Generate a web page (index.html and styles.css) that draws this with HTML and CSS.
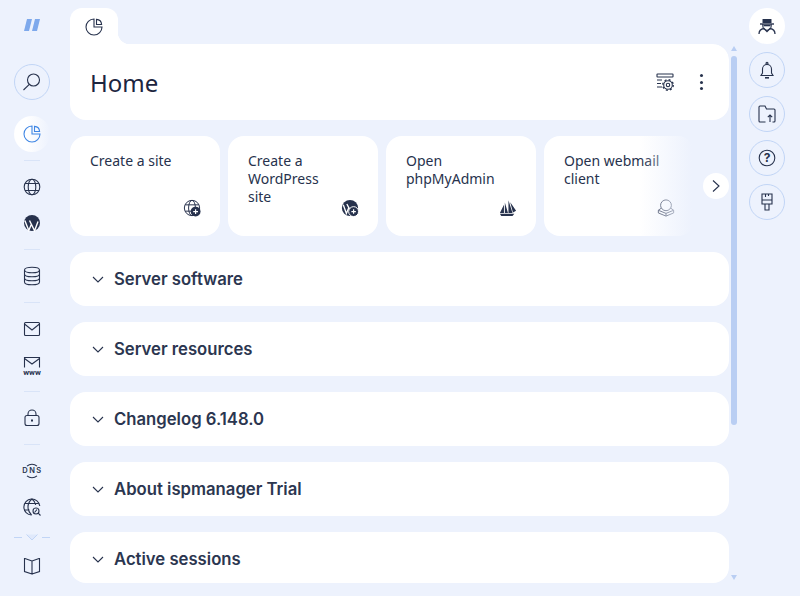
FILE: index.html
```html
<!DOCTYPE html>
<html lang="en">
<head>
  <meta charset="UTF-8" />
  <title>Home - ispmanager</title>
  <meta name="viewport" content="width=device-width, initial-scale=1" />
  <link rel="stylesheet" href="styles.css">
</head>
<body>
  <!-- Left menu -->
  <nav class="sidebar">
    <svg class="logo" width="16" height="12" viewBox="0 0 16 12"><path d="M3 0h5L5 12H0zM11 0h5l-3 12H8z" fill="#7ea9ec"/></svg>
    <button class="round-btn search-btn">
      <svg class="icon" viewBox="0 0 20 20"><circle cx="11.500" cy="8" r="6"/><path d="M7.300 12.300 1.500 18"/></svg>
    </button>
    <button class="round-btn home-btn">
      <svg class="icon icon-blue" viewBox="0 0 20 20"><path d="M10 2a8 8 0 1 0 8 8h-8z"/><path d="M12.500 2.400v5.100h5.100a5.500 5.500 0 0 0-5.100-5.100z"/></svg>
    </button>
    <div class="divider"></div>
    <a class="nav-item">
      <svg class="icon" viewBox="0 0 20 20"><circle cx="10" cy="10" r="7.800"/><ellipse cx="10" cy="10" rx="3.800" ry="7.800"/><path d="M3 6.500h14M3 13.500h14"/></svg>
    </a>
    <a class="nav-item">
      <svg class="icon" viewBox="0 0 20 20"><circle cx="10" cy="10" r="8" fill="#27324d" stroke="none"/><path d="M2.800 7.500 6.800 17.500 9.600 10.800M7.500 7.500 12.600 17.800 16 8.500" stroke="#fff" stroke-width="1.400"/></svg>
    </a>
    <div class="divider"></div>
    <a class="nav-item">
      <svg class="icon" viewBox="0 0 20 20"><ellipse cx="10" cy="4" rx="7.500" ry="2.800"/><path d="M2.500 4v12c0 1.600 3.400 2.800 7.500 2.800s7.500-1.200 7.500-2.800V4M2.500 8c0 1.600 3.400 2.800 7.500 2.800s7.500-1.200 7.500-2.800M2.500 12c0 1.600 3.400 2.800 7.500 2.800s7.500-1.200 7.500-2.800"/></svg>
    </a>
    <div class="divider"></div>
    <a class="nav-item">
      <svg class="icon" viewBox="0 0 20 20"><rect x="2.500" y="3.500" width="15" height="13" rx="1"/><path d="M2.500 5 10 11l7.500-6"/></svg>
    </a>
    <a class="nav-item www-item">
      <svg class="icon" viewBox="0 0 20 20"><path d="M2.500 12.500V2.500h15v10M2.500 3.500 10 9l7.500-5.500"/></svg>
      <span class="www-label">www</span>
    </a>
    <div class="divider"></div>
    <a class="nav-item">
      <svg class="icon" viewBox="0 0 20 20"><rect x="3" y="7.500" width="14" height="10" rx="2"/><path d="M6 7.500V6a4 4 0 0 1 8 0v1.500"/><path d="M10 11.500v2" stroke-width="2"/></svg>
    </a>
    <div class="divider"></div>
    <a class="nav-item dns-item">
      <svg class="icon" viewBox="0 0 20 20"><path d="M5 5.200a7.500 7.500 0 0 1 10 0M5 14.800a7.500 7.500 0 0 0 10 0"/></svg>
      <span class="dns-label">DNS</span>
    </a>
    <a class="nav-item">
      <svg class="icon" viewBox="0 0 20 20"><path d="M9.500 18a8 8 0 1 1 8.300-9"/><path d="M10 2C7.500 4 6 7 6 10s1.500 6 3.500 8M10 2c2 1.500 3.300 3.800 3.700 6M2.800 6.500h14M2.500 13h5"/><circle cx="14" cy="14" r="3"/><path d="M16.200 16.200 18.500 18.500M12.500 15.500l2.500-3"/></svg>
    </a>
    <div class="fold">
      <span class="fold-dash"></span>
      <svg width="12" height="7" viewBox="0 0 12 7"><path d="M.5.500 6 6 11.500.500" fill="#e0e9fb" stroke="#c1d5f6"/></svg>
      <span class="fold-dash"></span>
    </div>
    <a class="nav-item">
      <svg class="icon" viewBox="0 0 20 20"><path d="M10 5 3 2.500H2.500V15.500L10 18V5zM10 5l7-2.500h.500V15.500L10 18"/></svg>
    </a>
  </nav>

  <main class="content">
    <div class="tab-row">
      <div class="tab">
        <svg class="icon" viewBox="0 0 20 20"><path d="M10 2a8 8 0 1 0 8 8h-8z"/><path d="M12.500 2.400v5.100h5.100a5.500 5.500 0 0 0-5.100-5.100z"/></svg>
      </div>
    </div>

    <div class="scroll-area">
      <div class="page">
        <header class="page-head">
          <h1>Home</h1>
          <div class="head-actions">
            <svg class="icon" viewBox="0 0 20 20"><rect x="2" y="2" width="16" height="3" rx=".5"/><path d="M2 8h5M2 11.500h4M2 15h5"/><circle cx="13" cy="13" r="4.300"/><circle cx="13" cy="13" r="1.700"/><circle cx="13" cy="13" r="5.300" stroke-width="1.300" stroke-dasharray="2 2.160"/></svg>
            <span class="dots"><i></i><i></i><i></i></span>
          </div>
        </header>

        <div class="quick-wrap">
          <div class="quick-row">
            <a class="quick-card">
              <span>Create a site</span>
              <svg class="icon quick-icon" viewBox="0 0 20 20"><circle cx="10" cy="10" r="8.500"/><ellipse cx="10" cy="10" rx="3.800" ry="8.500"/><path d="M2.500 6.500h15M2.500 13.500h15"/><circle cx="14" cy="14" r="5.500" fill="#27324d" stroke="none"/><path d="M14 11.300v5.400M11.300 14h5.400" stroke="#fff" stroke-width="1.300"/></svg>
            </a>
            <a class="quick-card">
              <span>Create a<br>WordPress<br>site</span>
              <svg class="icon quick-icon" viewBox="0 0 20 20"><circle cx="10" cy="10" r="9" fill="#27324d" stroke="none"/><path d="M2.500 6.500 6 16l3-7M6.500 5.500 11 14" stroke="#fff" stroke-width="1.500"/><circle cx="14" cy="14" r="5.500" fill="#27324d" stroke="#fff"/><path d="M14 11.500v5M11.500 14h5" stroke="#fff" stroke-width="1.300"/></svg>
            </a>
            <a class="quick-card">
              <span>Open<br>phpMyAdmin</span>
              <svg class="icon quick-icon" viewBox="0 0 20 20"><path d="M1 15.500 5.500 6.500V15.500zM6.500 15.500V4L10 15.500zM10.500 15.500V1.500L15 15.500zM12.500 3.500 19 13 15.500 15z" fill="#27324d" stroke="none"/><path d="M1 16.500h16L15 19H2.500z" fill="#27324d" stroke="none"/></svg>
            </a>
            <a class="quick-card">
              <span>Open webmail client</span>
              <svg class="icon quick-icon" viewBox="0 0 20 20"><circle cx="10" cy="7" r="6"/><path d="M5 10 1.500 12.500v3L10 19l8.500-3.500v-3L15 10M1.500 12.500 10 16l8.500-3.500M10 16v3"/></svg>
            </a>
          </div>
          <div class="quick-fade"></div>
          <button class="next-btn">
            <svg width="8" height="12" viewBox="0 0 8 12"><path d="M1 .5 7 6l-6 5.500" fill="none" stroke="#27324d" stroke-width="1.100"/></svg>
          </button>
        </div>

        <section class="panel"><svg class="chev" width="12" height="7" viewBox="0 0 12 7"><path d="M1 1l5 5 5-5"/></svg><h2>Server software</h2></section>
        <section class="panel"><svg class="chev" width="12" height="7" viewBox="0 0 12 7"><path d="M1 1l5 5 5-5"/></svg><h2>Server resources</h2></section>
        <section class="panel"><svg class="chev" width="12" height="7" viewBox="0 0 12 7"><path d="M1 1l5 5 5-5"/></svg><h2>Changelog 6.148.0</h2></section>
        <section class="panel"><svg class="chev" width="12" height="7" viewBox="0 0 12 7"><path d="M1 1l5 5 5-5"/></svg><h2>About ispmanager Trial</h2></section>
        <section class="panel"><svg class="chev" width="12" height="7" viewBox="0 0 12 7"><path d="M1 1l5 5 5-5"/></svg><h2>Active sessions</h2></section>
      </div>

      <div class="scrollbar">
        <span class="arrow-up"></span>
        <span class="thumb"></span>
        <span class="arrow-down"></span>
      </div>
    </div>
  </main>

  <!-- Right buttons -->
  <aside class="rail">
    <button class="round-btn user-btn">
      <svg class="icon" viewBox="0 0 20 20"><path d="M5.500 7V3.500Q5.500 3 6 3h8q.5 0 .5.500V7z" fill="#27324d" stroke="none"/><path d="M3 8h14" stroke-width="1.400"/><path d="M5.800 8v2a4.200 4.200 0 0 0 8.400 0V8"/><path d="M6.500 9.500h7" stroke-width="1.600"/><path d="M2 18c0-3 2-5 5-5.500l3 3 3-3c3 .5 5 2.500 5 5.500" stroke-width="1.300"/></svg>
    </button>
    <button class="round-btn">
      <svg class="icon" viewBox="0 0 20 20"><path d="M4 15.500h12l-1.500-2.500V9a4.500 4.500 0 0 0-9 0v4z"/><path d="M8 17.800h4" stroke-width="1.600"/><circle cx="10" cy="3.200" r="1"/></svg>
    </button>
    <button class="round-btn">
      <svg class="icon" viewBox="0 0 20 20"><path d="M8.500 18H3a1 1 0 0 1-1-1V3a1 1 0 0 1 1-1h5l1.500 3H17a1 1 0 0 1 1 1v11a1 1 0 0 1-1 1h-1.500"/><path d="M13 18v-7M10.800 13.200 13 11l2.200 2.200"/></svg>
    </button>
    <button class="round-btn">
      <svg class="icon" viewBox="0 0 20 20"><circle cx="10" cy="10" r="7.800"/><text class="q-mark" x="10" y="14" text-anchor="middle">?</text></svg>
    </button>
    <button class="round-btn">
      <svg class="icon" viewBox="0 0 20 20"><path d="M5 2h10v10H5zM5 8h10M8.500 2v3M11.500 2v2M8 12v6h4v-6"/></svg>
    </button>
  </aside>
</body>
</html>
```

FILE: styles.css
```css
* {
  box-sizing: border-box;
}
html, body {
  height: 100%;
}
body {
  margin: 0;
  display: flex;
  overflow: hidden;
  background: #edf2fd;
  color: #27324d;
  font-family: 'Noto Sans', sans-serif;
}
button {
  padding: 0;
  font: inherit;
  cursor: pointer;
}
a {
  cursor: pointer;
}
.icon {
  display: block;
  width: 20px;
  height: 20px;
  fill: none;
  stroke: #27324d;
  stroke-width: 1.1;
}
.icon-blue {
  stroke: #3f86e4;
}

/* left menu */
.sidebar {
  flex: none;
  width: 70px;
  padding: 19px 6px 0 0;
  display: flex;
  flex-direction: column;
  align-items: center;
}
.logo {
  display: block;
  margin-bottom: 33px;
}
.round-btn {
  width: 36px;
  height: 36px;
  flex: none;
  display: flex;
  align-items: center;
  justify-content: center;
  border: 1px solid #c1d5f6;
  border-radius: 50%;
  background: transparent;
}
.search-btn {
  margin-bottom: 16px;
}
.home-btn {
  border: none;
  background: linear-gradient(90deg, #ffffff 35%, #edf2fd 100%);
}
.divider {
  width: 16px;
  height: 1px;
  margin: 8px 0;
  background: #d9e4f8;
}
.nav-item {
  position: relative;
  width: 36px;
  height: 36px;
  flex: none;
  display: flex;
  align-items: center;
  justify-content: center;
}
.www-label {
  position: absolute;
  left: 0;
  right: 0;
  top: 21px;
  text-align: center;
  font-family: 'Roboto', sans-serif;
  font-size: 8px;
  font-weight: 700;
  line-height: 10px;
}
.dns-label {
  position: absolute;
  left: 1px;
  right: 0;
  top: 12px;
  text-align: center;
  font-family: 'Inter', sans-serif;
  font-size: 7.5px;
  font-weight: 600;
  letter-spacing: 1.5px;
  line-height: 12px;
}
.fold {
  display: flex;
  align-items: center;
  justify-content: center;
  gap: 4px;
  width: 36px;
  height: 22px;
  margin-top: 1px;
}
.fold-dash {
  width: 8px;
  height: 1px;
  background: #c1d5f6;
}

/* middle column */
.content {
  flex: none;
  width: 667px;
  display: flex;
  flex-direction: column;
  padding: 8px 0 13px;
  min-height: 0;
}
.tab-row {
  flex: none;
  height: 36px;
}
.tab {
  position: relative;
  width: 48px;
  height: 36px;
  padding: 9px 0 0 14px;
  background: #fff;
  border-radius: 12px 12px 0 0;
}
.tab::after {
  content: '';
  position: absolute;
  left: 48px;
  bottom: 0;
  width: 12px;
  height: 12px;
  background: radial-gradient(circle at 100% 0, transparent 12px, #fff 12.5px);
}
.scroll-area {
  flex: 1;
  min-height: 0;
  display: flex;
}
.page {
  flex: none;
  width: 659px;
  height: 100%;
  overflow: hidden;
  border-radius: 0 16px 16px 16px;
}
.page-head {
  height: 76px;
  padding: 0 24px 0 20px;
  display: flex;
  align-items: center;
  justify-content: space-between;
  background: #fff;
  border-radius: 0 16px 16px 16px;
}
h1 {
  margin: 0;
  font-family: 'Noto Sans', sans-serif;
  font-size: 24px;
  font-weight: 400;
  color: #1c2540;
}
.head-actions {
  display: flex;
  align-items: center;
  gap: 22px;
}
.dots {
  display: flex;
  flex-direction: column;
  gap: 3.7px;
  width: 8px;
  align-items: center;
}
.dots i {
  display: block;
  width: 3px;
  height: 3px;
  border-radius: 50%;
  background: #27324d;
}

/* quick actions */
.quick-wrap {
  position: relative;
  height: 100px;
  margin: 16px 0;
}
.quick-row {
  display: flex;
  gap: 8px;
  overflow: hidden;
  height: 100%;
}
.quick-card {
  position: relative;
  flex: none;
  width: 150px;
  height: 100px;
  padding: 16px 20px;
  background: #fff;
  border-radius: 16px;
  font-size: 14px;
  line-height: 18px;
}
.quick-card span {
  display: block;
}
.quick-icon {
  position: absolute;
  right: 19px;
  bottom: 19px;
  width: 18px;
  height: 18px;
}
.quick-fade {
  position: absolute;
  top: 0;
  right: 0;
  width: 89px;
  height: 100%;
  background: linear-gradient(90deg, rgba(237, 242, 253, 0), #edf2fd 58%);
}
.next-btn {
  position: absolute;
  top: 37px;
  right: 0;
  width: 26px;
  height: 26px;
  display: flex;
  align-items: center;
  justify-content: center;
  background: #fff;
  border: none;
  border-radius: 50%;
}

/* accordion */
.panel {
  height: 54px;
  margin-bottom: 16px;
  padding: 0 22px;
  display: flex;
  align-items: center;
  gap: 10px;
  background: #fff;
  border-radius: 16px;
}
h2 {
  margin: 0;
  font-family: 'Inter', sans-serif;
  font-size: 16.7px;
  font-weight: 600;
  color: #2b3650;
}
.chev {
  flex: none;
  fill: none;
  stroke: #27324d;
  stroke-width: 1.1;
}

/* scrollbar */
.scrollbar {
  flex: none;
  width: 6px;
  margin-left: 2px;
  padding: 2px 0 3px;
  display: flex;
  flex-direction: column;
  align-items: center;
}
.arrow-up, .arrow-down {
  display: block;
  flex: none;
  width: 0;
  height: 0;
  border-left: 3px solid transparent;
  border-right: 3px solid transparent;
}
.arrow-up {
  border-bottom: 5px solid #b9cef3;
}
.arrow-down {
  margin-top: auto;
  border-top: 5px solid #b9cef3;
}
.thumb {
  display: block;
  flex: none;
  width: 6px;
  height: 369px;
  margin-top: 5px;
  border-radius: 3px;
  background: #b9cef3;
}

/* right column */
.rail {
  flex: none;
  width: 63px;
  padding: 8px 0 0 12px;
  display: flex;
  flex-direction: column;
  gap: 8px;
}
.user-btn {
  background: #fff;
  border: none;
}
.q-mark {
  font-family: 'Inter', sans-serif;
  font-size: 12px;
  font-weight: 700;
  fill: #27324d;
  stroke: none;
}
```
